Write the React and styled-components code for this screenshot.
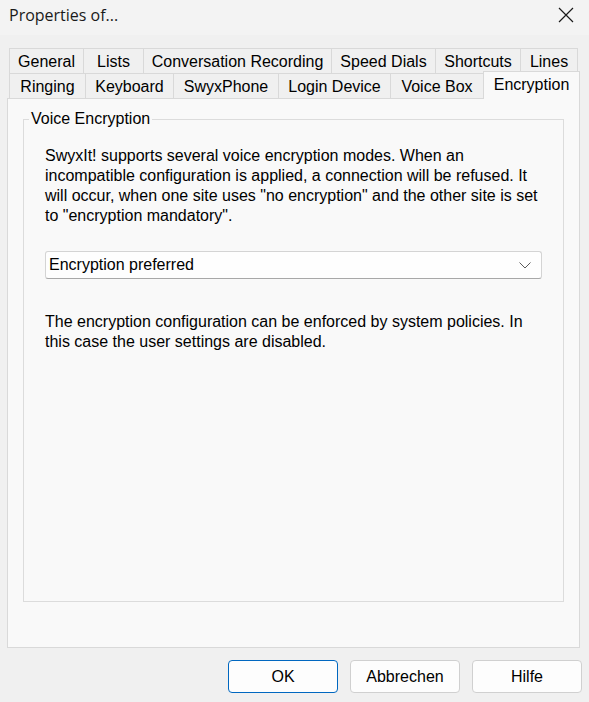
import React from 'react';
import styled, { createGlobalStyle } from 'styled-components';

const GlobalStyle = createGlobalStyle`
    html, body {
        margin: 0;
        padding: 0;
        background: #f0f0f0;
    }
    body {
        font-family: "Liberation Sans", Arial, sans-serif;
        font-size: 16px;
        color: #000;
    }
`;

const topTabs = [
    { label: 'General', width: 74 },
    { label: 'Lists', width: 60 },
    { label: 'Conversation Recording', width: 188 },
    { label: 'Speed Dials', width: 104 },
    { label: 'Shortcuts', width: 85 },
    { label: 'Lines', width: 58, last: true },
];

const bottomTabs = [
    { label: 'Ringing', width: 76 },
    { label: 'Keyboard', width: 88 },
    { label: 'SwyxPhone', width: 105 },
    { label: 'Login Device', width: 112 },
    { label: 'Voice Box', width: 93 },
    { label: 'Encryption', width: 97, active: true },
];

const CloseIcon = () => (
    <svg width="16" height="16" viewBox="0 0 16 16">
        <path d="M1 1 L15 15 M15 1 L1 15" stroke="#1a1a1a" strokeWidth="1.2" fill="none" />
    </svg>
);

const Chevron = () => (
    <svg width="12" height="7" viewBox="0 0 12 7">
        <path d="M0.5 0.5 L6 6 L11.5 0.5" stroke="#5a5a5a" strokeWidth="1" fill="none" />
    </svg>
);

const App = () => {
    return (
        <Window>
            <GlobalStyle />
            <TitleBar>
                <Title>Properties of...</Title>
                <CloseButton>
                    <CloseIcon />
                </CloseButton>
            </TitleBar>
            <Body>
                <TabStrip>
                    <TabRow>
                        {topTabs.map((t) => (
                            <Tab key={t.label} $width={t.width} $last={t.last}>
                                {t.label}
                            </Tab>
                        ))}
                    </TabRow>
                    <TabRow>
                        {bottomTabs.map((t) =>
                            t.active ? (
                                <ActiveTab key={t.label} $width={t.width}>
                                    {t.label}
                                </ActiveTab>
                            ) : (
                                <Tab key={t.label} $width={t.width}>
                                    {t.label}
                                </Tab>
                            )
                        )}
                    </TabRow>
                </TabStrip>
                <Panel>
                    <GroupBox>
                        <Legend>Voice Encryption</Legend>
                        <Text>
                            SwyxIt! supports several voice encryption modes. When an
                            incompatible configuration is applied, a connection will be refused. It
                            will occur, when one site uses "no encryption" and the other site is set
                            to "encryption mandatory".
                        </Text>
                        <ComboBox>
                            <span>Encryption preferred</span>
                            <Chevron />
                        </ComboBox>
                        <Note>
                            The encryption configuration can be enforced by system policies. In
                            this case the user settings are disabled.
                        </Note>
                    </GroupBox>
                </Panel>
                <ButtonRow>
                    <Button $primary>OK</Button>
                    <Button>Abbrechen</Button>
                    <Button>Hilfe</Button>
                </ButtonRow>
            </Body>
        </Window>
    );
};

export default App;

const Window = styled.div`
    width: 589px;
    height: 702px;
    display: flex;
    flex-direction: column;
    background: #f0f0f0;
    overflow: hidden;
`;

const TitleBar = styled.div`
    box-sizing: border-box;
    height: 35px;
    padding: 0 15px 6px 9px;
    background: #f3f3f3;
    display: flex;
    align-items: center;
    justify-content: space-between;
`;

const Title = styled.span`
    font-family: "Open Sans", "Noto Sans", sans-serif;
    font-size: 16px;
    color: #1a1a1a;
`;

const CloseButton = styled.span`
    display: flex;
    width: 16px;
    height: 16px;
`;

const Body = styled.div`
    flex: 1;
    padding: 13px 0 0 7px;
    display: flex;
    flex-direction: column;
`;

const TabStrip = styled.div`
    margin-left: 2px;
    display: flex;
    flex-direction: column;
`;

const TabRow = styled.div`
    display: flex;
    height: 25px;
    align-items: flex-end;
`;

const Tab = styled.div`
    box-sizing: border-box;
    width: ${(p) => p.$width}px;
    height: 25px;
    padding-top: 1px;
    border-top: 1px solid #d9d9d9;
    border-left: 1px solid #d9d9d9;
    border-right: ${(p) => (p.$last ? '1px solid #d9d9d9' : 'none')};
    background: #f0f0f0;
    display: flex;
    align-items: center;
    justify-content: center;
    white-space: nowrap;
    line-height: 20px;
`;

const ActiveTab = styled(Tab)`
    position: relative;
    top: 1px;
    z-index: 1;
    height: 28px;
    border-right: 1px solid #d9d9d9;
    background: #f9f9f9;
    padding: 0 0 2px;
`;

const Panel = styled.div`
    box-sizing: border-box;
    width: 573px;
    height: 550px;
    border: 1px solid #d9d9d9;
    background: #f9f9f9;
    padding: 9px 0 0 15px;
`;

const GroupBox = styled.fieldset`
    box-sizing: border-box;
    width: 541px;
    height: 494px;
    margin: 0;
    padding: 0 21px;
    border: 1px solid #dcdcdc;
    min-width: 0;
`;

const Legend = styled.legend`
    margin-left: -16px;
    padding: 0 2px;
    line-height: 22px;
    color: #000;
`;

const Text = styled.p`
    margin: 16px 0 0;
    line-height: 20px;
`;

const ComboBox = styled.div`
    box-sizing: border-box;
    margin-top: 25px;
    height: 28px;
    padding: 0 10px 0 3px;
    border: 1px solid #d4d4d4;
    border-bottom-color: #a8a8a8;
    border-radius: 3px;
    background: #fefefe;
    display: flex;
    align-items: center;
    justify-content: space-between;
`;

const Note = styled.p`
    margin: 33px 0 0;
    line-height: 20px;
`;

const ButtonRow = styled.div`
    margin-top: 12px;
    padding-right: 7px;
    display: flex;
    justify-content: flex-end;
    gap: 12px;
`;

const Button = styled.div`
    box-sizing: border-box;
    width: 110px;
    height: 33px;
    border: 1px solid ${(p) => (p.$primary ? '#0067c0' : '#d0d0d0')};
    border-radius: 4px;
    background: #fdfdfd;
    display: flex;
    align-items: center;
    justify-content: center;
`;
